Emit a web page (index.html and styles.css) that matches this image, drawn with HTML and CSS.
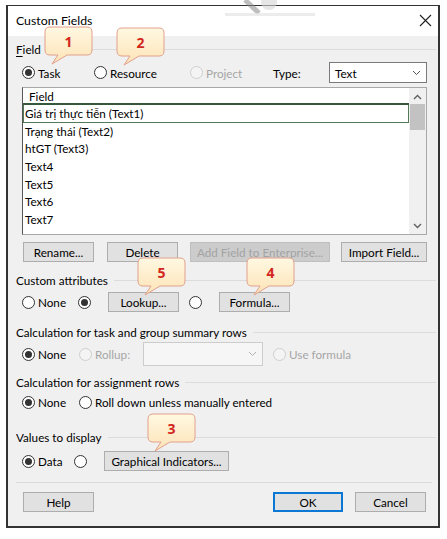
FILE: index.html
```html
<!DOCTYPE html>
<html lang="vi">
<head>
	<meta charset="UTF-8">
	<title>Custom Fields</title>
	<link rel="stylesheet" href="styles.css">
</head>
<body>
<div class="screen">
	<svg class="stamp" width="90" height="18" viewBox="0 0 90 18">
		<path d="M20 0 L34 13" stroke="#8a8a8a" stroke-width="5" opacity=".55"/>
		<circle cx="44" cy="2" r="8" fill="#d6d6d6" opacity=".6"/>
		<rect x="0" y="13" width="90" height="3" fill="#e4e4e4" opacity=".7"/>
	</svg>

	<div class="dialog">
		<div class="titlebar">
			<span class="title">Custom Fields</span>
			<svg class="close" width="13" height="13" viewBox="0 0 13 13">
				<path d="M1 1 L12 12 M12 1 L1 12" stroke="#222" stroke-width="1.1"/>
			</svg>
		</div>

		<div class="body">
			<div class="group g-field"><span><u>F</u>ield</span></div>
			<div class="row field-row">
				<span class="opt task"><i class="radio on"></i>Task</span>
				<span class="opt resource"><i class="radio"></i>Resource</span>
				<span class="opt off project"><i class="radio"></i>Project</span>
				<span class="type-label">Type:</span>
				<div class="select type-select">
					<span>Text</span>
					<svg width="9" height="6" viewBox="0 0 9 6"><path d="M1 1 L4.5 4.5 L8 1" fill="none" stroke="#555" stroke-width="1"/></svg>
				</div>
			</div>

			<div class="list">
				<div class="list-rows">
					<div class="list-head">Field</div>
					<div class="list-item sel">Giá trị thực tiễn (Text1)</div>
					<div class="list-item">Trạng thái (Text2)</div>
					<div class="list-item">htGT (Text3)</div>
					<div class="list-item">Text4</div>
					<div class="list-item">Text5</div>
					<div class="list-item">Text6</div>
					<div class="list-item">Text7</div>
					<div class="list-item">Text8</div>
				</div>
				<div class="scrollbar">
					<svg class="arrow" width="9" height="6" viewBox="0 0 9 6"><path d="M1 5 L4.5 1.5 L8 5" fill="none" stroke="#606060" stroke-width="1.4"/></svg>
					<div class="thumb"></div>
					<svg class="arrow down" width="9" height="6" viewBox="0 0 9 6"><path d="M1 1 L4.5 4.5 L8 1" fill="none" stroke="#606060" stroke-width="1.4"/></svg>
				</div>
			</div>

			<div class="row btn-row">
				<button class="btn rename">Rename...</button>
				<button class="btn delete">Delete</button>
				<button class="btn disabled enterprise">Add Field to Enterprise...</button>
				<button class="btn import">Import Field...</button>
			</div>

			<div class="group g-attr"><span>Custom attributes</span></div>
			<div class="row attr-row">
				<span class="opt none"><i class="radio"></i>None</span>
				<span class="opt solo"><i class="radio on"></i></span>
				<button class="btn lookup">Lookup...</button>
				<span class="opt solo"><i class="radio"></i></span>
				<button class="btn formula">Formula...</button>
			</div>

			<div class="group g-calc"><span>Calculation for task and group summary rows</span></div>
			<div class="row calc-row">
				<span class="opt none2"><i class="radio on"></i>None</span>
				<span class="opt off rollup"><i class="radio"></i>Rollup:</span>
				<div class="select off rollup-select">
					<svg width="9" height="6" viewBox="0 0 9 6"><path d="M1 1 L4.5 4.5 L8 1" fill="none" stroke="#b0b0b0" stroke-width="1"/></svg>
				</div>
				<span class="opt off"><i class="radio"></i>Use formula</span>
			</div>

			<div class="group g-assign"><span>Calculation for assignment rows</span></div>
			<div class="row assign-row">
				<span class="opt none2"><i class="radio on"></i>None</span>
				<span class="opt"><i class="radio"></i>Roll down unless manually entered</span>
			</div>

			<div class="group g-values"><span>Values to display</span></div>
			<div class="row values-row">
				<span class="opt data"><i class="radio on"></i>Data</span>
				<span class="opt solo"><i class="radio"></i></span>
				<button class="btn indicators">Graphical Indicators...</button>
			</div>

			<div class="sep"></div>

			<div class="row footer">
				<button class="btn help">Help</button>
				<div class="footer-right">
					<button class="btn ok">OK</button>
					<button class="btn cancel">Cancel</button>
				</div>
			</div>
		</div>
	</div>

	<!-- numbered notes -->
	<svg width="0" height="0" class="defs">
		<defs>
			<linearGradient id="cream" x1="0" y1="0" x2="0" y2="1">
				<stop offset="0" stop-color="#fff8e2"/>
				<stop offset="1" stop-color="#fde3b6"/>
			</linearGradient>
		</defs>
	</svg>
	<div class="note n1"><svg width="50" height="40" viewBox="0 0 50 40"><path class="bubble" d="M6 1 H43 Q48 1 48 6 V24 Q48 29 43 29 H23 L8 38 L14 29 H6 Q1 29 1 24 V6 Q1 1 6 1 Z"/></svg><b>1</b></div>
	<div class="note n2"><svg width="50" height="40" viewBox="0 0 50 40"><path class="bubble" d="M6 1 H43 Q48 1 48 6 V24 Q48 29 43 29 H23 L8 38 L14 29 H6 Q1 29 1 24 V6 Q1 1 6 1 Z"/></svg><b>2</b></div>
	<div class="note n5"><svg width="50" height="40" viewBox="0 0 50 40"><path class="bubble" d="M6 1 H43 Q48 1 48 6 V24 Q48 29 43 29 H23 L8 38 L14 29 H6 Q1 29 1 24 V6 Q1 1 6 1 Z"/></svg><b>5</b></div>
	<div class="note n4"><svg width="50" height="40" viewBox="0 0 50 40"><path class="bubble" d="M6 1 H43 Q48 1 48 6 V24 Q48 29 43 29 H23 L8 38 L14 29 H6 Q1 29 1 24 V6 Q1 1 6 1 Z"/></svg><b>4</b></div>
	<div class="note n3"><svg width="50" height="40" viewBox="0 0 50 40"><path class="bubble" d="M6 1 H43 Q48 1 48 6 V24 Q48 29 43 29 H23 L8 38 L14 29 H6 Q1 29 1 24 V6 Q1 1 6 1 Z"/></svg><b>3</b></div>
</div>
</body>
</html>
```

FILE: styles.css
```css
* {
    box-sizing: border-box;
}
body {
    margin: 0;
    background: #fff;
    font-family: Lato, "Open Sans", sans-serif;
    font-size: 11.7px;
    color: #000;
}
button {
    font: inherit;
    color: inherit;
}
u {
    text-decoration: underline;
    text-underline-offset: 2px;
}
.screen {
    position: relative;
    width: 447px;
    height: 539px;
    padding: 5px 0 0 6px;
}
.stamp {
    position: absolute;
    left: 225px;
    top: 0;
}
.defs {
    position: absolute;
}

/* dialog frame */
.dialog {
    width: 434px;
    height: 523px;
    border: 2px solid #333;
    border-top-width: 1.5px;
    background: #f0f0f0;
    display: flex;
    flex-direction: column;
}
.titlebar {
    height: 30px;
    background: #fff;
    display: flex;
    align-items: center;
    justify-content: space-between;
    padding: 0 6px 0 8px;
    flex: none;
}
.title {
    font-size: 12.3px;
    margin-top: -2px;
}
.close {
    margin-top: -2px;
}
.body {
    padding: 0 2px 0 8px;
}

/* group captions with the rule after them */
.group {
    display: flex;
    align-items: center;
    height: 14px;
    white-space: nowrap;
}
.group::after {
    content: "";
    flex: 1;
    height: 1px;
    background: #dcdcdc;
    margin-left: 6px;
}
.g-field { margin-top: 6px; }
.g-attr { margin-top: 11px; }
.g-calc { margin-top: 13px; }
.g-assign { margin-top: 9px; }
.g-values { margin-top: 20px; }

.row {
    display: flex;
    align-items: center;
    padding-left: 6px;
    white-space: nowrap;
}

/* radio options */
.opt {
    display: flex;
    align-items: center;
}
.radio {
    width: 13px;
    height: 13px;
    border: 1px solid #333;
    border-radius: 50%;
    background: #fff;
    display: inline-flex;
    align-items: center;
    justify-content: center;
    margin-right: 3px;
    flex: none;
}
.radio.on::after {
    content: "";
    width: 7px;
    height: 7px;
    border-radius: 50%;
    background: #333;
}
.opt.off {
    color: #a6a6a6;
}
.opt.off .radio {
    border-color: #cfcfcf;
    background: #f4f4f4;
}

.field-row {
    margin-top: 6px;
    height: 21px;
}
.task { width: 72px; }
.resource { width: 96px; }
.project { width: 83px; }
.type-label { width: 56px; }

.select {
    display: flex;
    align-items: center;
    justify-content: space-between;
    background: #fff;
    border: 1px solid #7a7a7a;
    padding: 0 5px 0 5px;
}
.type-select {
    width: 98px;
    height: 21px;
}
.select.off {
    background: #f6f6f6;
    border-color: #cccccc;
    justify-content: flex-end;
}

/* field list */
.list {
    margin: 4px 0 0 6px;
    width: 405px;
    height: 148px;
    border: 1px solid #a8a8a8;
    border-left-color: #555;
    background: #fff;
    display: flex;
    overflow: hidden;
}
.list-rows {
    flex: 1;
    overflow: hidden;
}
.list-head {
    height: 17px;
    line-height: 16px;
    padding-left: 6px;
    border-bottom: 2px solid #35583a;
}
.list-item {
    height: 17.7px;
    line-height: 17px;
    padding-left: 2px;
}
.list-item.sel {
    border: 1px solid #557a57;
    border-top: none;
    padding-left: 1px;
}
.scrollbar {
    width: 17px;
    background: #f0f0f0;
    display: flex;
    flex-direction: column;
    align-items: center;
}
.arrow {
    margin-top: 6px;
}
.arrow.down {
    margin-top: auto;
    margin-bottom: 5px;
}
.thumb {
    width: 15px;
    height: 26px;
    margin-top: 4px;
    background: #c2c2c2;
}

/* buttons */
.btn {
    height: 20px;
    padding: 0;
    border: 1px solid #adadad;
    background: #e1e1e1;
    display: flex;
    align-items: center;
    justify-content: center;
}
.btn.disabled {
    color: #a3a3a3;
    background: #cccccc;
    border-color: #bfbfbf;
}
.btn-row {
    margin-top: 7px;
    padding-left: 7px;
}
.rename { width: 71px; margin-right: 13px; }
.delete { width: 71px; margin-right: 12px; }
.enterprise { width: 140px; margin-right: 11px; }
.import { width: 86px; }

.attr-row {
    margin-top: 5px;
    height: 20px;
}
.none { width: 56px; }
.solo { width: 30px; }
.lookup { width: 71px; margin-right: 10px; }
.formula { width: 71px; }

.calc-row {
    margin-top: 3px;
    height: 24px;
}
.none2 { width: 57px; }
.rollup { width: 64px; }
.rollup-select {
    width: 120px;
    height: 24px;
    margin-right: 10px;
}

.assign-row {
    margin-top: 5px;
    height: 16px;
}

.values-row {
    margin-top: 7px;
    height: 20px;
}
.data { width: 52px; }
.indicators { width: 125px; }

.sep {
    margin: 11px 4px 0 0;
    height: 1px;
    background: #dadada;
}
.footer {
    margin-top: 9px;
    padding-left: 7px;
    width: 410px;
    justify-content: space-between;
}
.footer-right {
    display: flex;
    gap: 12px;
}
.help { width: 71px; }
.ok {
    width: 70px;
    border: 2px solid #0a78d4;
}
.cancel { width: 71px; }

/* numbered notes */
.note {
    position: absolute;
    width: 50px;
    height: 40px;
}
.note svg {
    display: block;
}
.bubble {
    fill: url(#cream);
    stroke: #e2a08c;
    stroke-width: 1;
}
.note b {
    position: absolute;
    left: 1px;
    top: 6px;
    width: 47px;
    text-align: center;
    font-family: "Open Sans", sans-serif;
    font-size: 14px;
    font-weight: 700;
    color: #d3261c;
}
.n1 { left: 44px; top: 26px; }
.n2 { left: 116px; top: 27px; }
.n5 { left: 137px; top: 257px; }
.n4 { left: 246px; top: 257px; }
.n3 { left: 147px; top: 413px; }
```
